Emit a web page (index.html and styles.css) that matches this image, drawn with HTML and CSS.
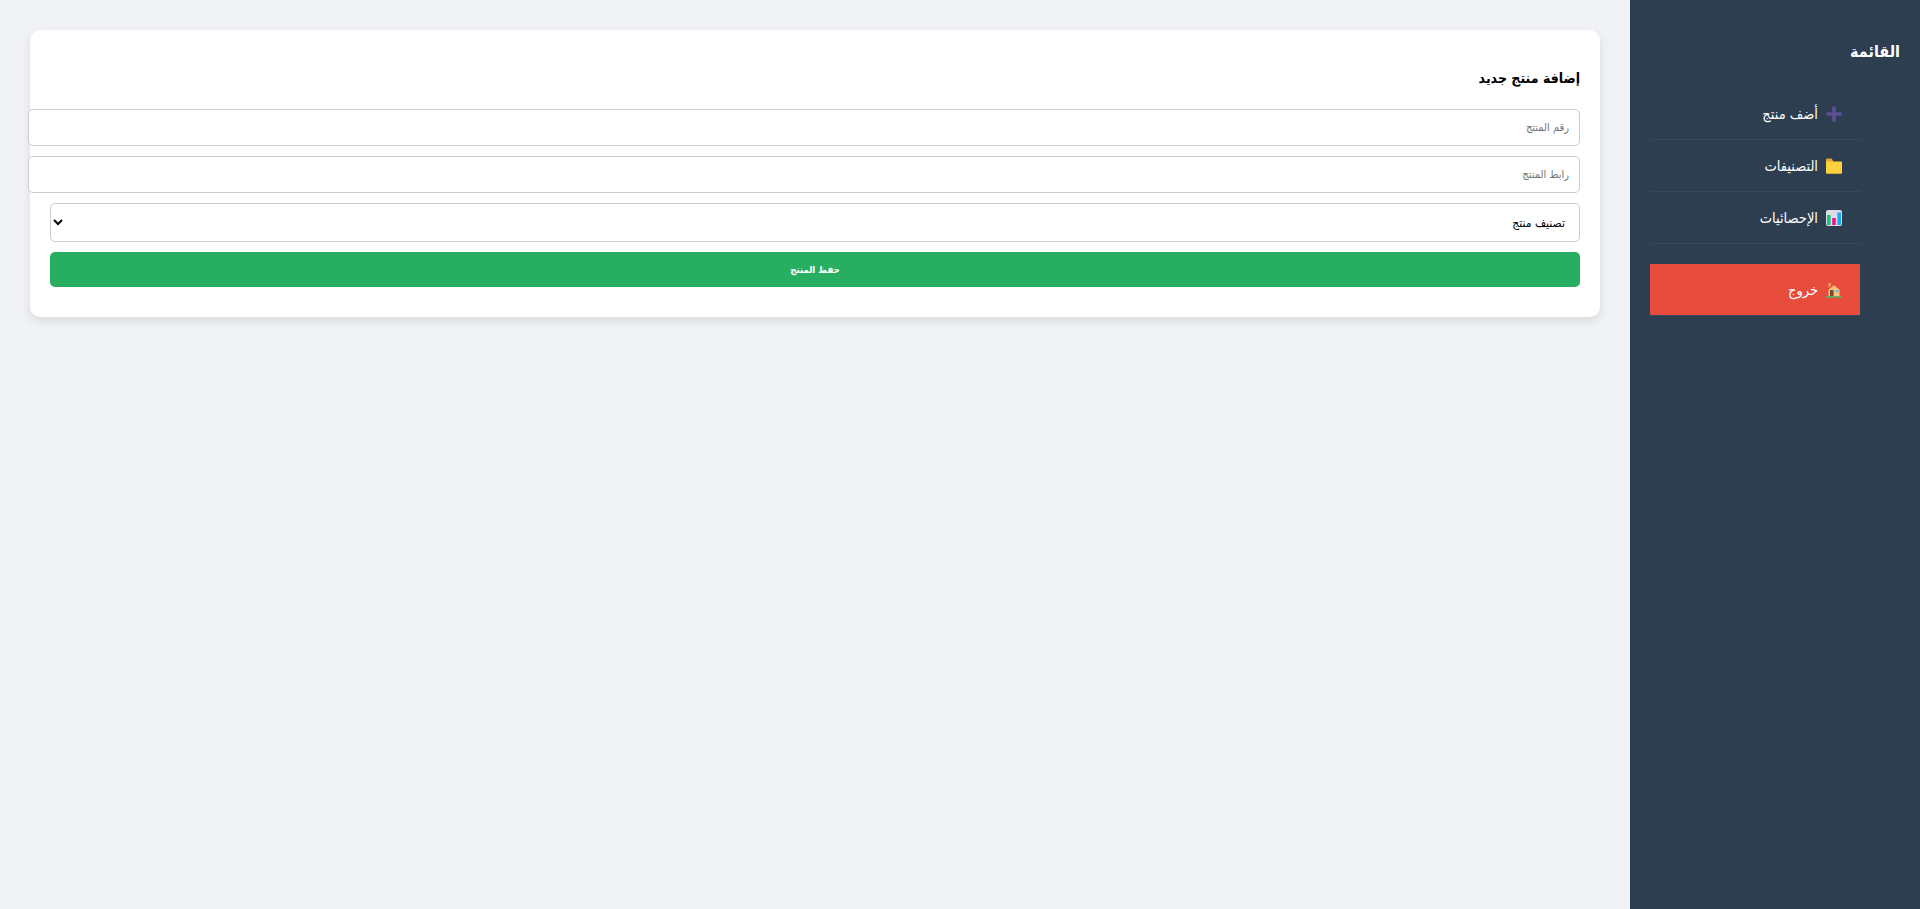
FILE: index.html
```html
<!DOCTYPE html>
<html lang="ar" dir="rtl">
    <head>
        <meta charset="UTF-8" />
        <meta name="viewport" content="width=device-width, initial-scale=1.0" />
        <title>إضافة منتج جديد</title>
        <link rel="stylesheet" href="styles.css">
    </head>

    <body>
        <div class="sidebar">
            <h2 class="sidebar-title">القائمة</h2>
            <ul class="menu">
                <li>
                    <a class="menu-link">
                        <svg class="menu-icon" viewBox="0 0 16 16"><path d="M6.2.5h3.6v5.7h5.7v3.6H9.8v5.7H6.2V9.8H.5V6.2h5.7z" fill="#5c4f96"/></svg>
                        <span>أضف منتج</span>
                    </a>
                </li>
                <li>
                    <a class="menu-link">
                        <svg class="menu-icon" viewBox="0 0 16 16">
                            <path d="M0 1.5q0-1 1-1h4.5l1.5 2v2H0z" fill="#e8a33a"/>
                            <path d="M0 3.5h15q1 0 1 1V15q0 .8-1 .8H1q-1 0-1-.8z" fill="#fdd13c"/>
                        </svg>
                        <span>التصنيفات</span>
                    </a>
                </li>
                <li>
                    <a class="menu-link">
                        <svg class="menu-icon" viewBox="0 0 16 16">
                            <rect width="16" height="16" rx="2" fill="#dcdce6"/>
                            <rect x="1" y="5" width="3.6" height="10" fill="#12c77c"/>
                            <rect x="6.2" y="8" width="3.6" height="7" fill="#f0148c"/>
                            <rect x="11.4" y="2.5" width="3.6" height="12.5" fill="#1ea7f0"/>
                        </svg>
                        <span>الإحصائيات</span>
                    </a>
                </li>
                <li class="logout">
                    <a class="menu-link">
                        <svg class="menu-icon" viewBox="0 0 16 16">
                            <rect x="2.5" y="1" width="2.5" height="5" fill="#f2a65e"/>
                            <path d="M2.5 7.5 8 3l5.5 4.5V14h-11z" fill="#f5c67c"/>
                            <path d="M1 8 8 2l7 6" fill="none" stroke="#f2453a" stroke-width="1.5"/>
                            <rect x="4" y="8" width="3.6" height="6" fill="#7a4a32"/>
                            <rect x="9.5" y="7.5" width="3" height="3" rx="1.5" fill="#6fb4e8"/>
                            <rect y="14" width="16" height="1.6" fill="#58b368"/>
                        </svg>
                        <span>خروج</span>
                    </a>
                </li>
            </ul>
        </div>

        <div class="main">
            <div class="card">
                <h3 class="card-title">إضافة منتج جديد</h3>
                <form>
                    <input class="text-input" type="text" placeholder="رقم المنتج" />
                    <input class="text-input" type="text" placeholder="رابط المنتج" />
                    <select class="select-input">
                        <option>تصنيف منتج</option>
                    </select>
                    <button class="save-btn" type="button">حفظ المنتج</button>
                </form>
            </div>
        </div>
    </body>
</html>
```

FILE: styles.css
```css
* {
    font-family: "DejaVu Sans", sans-serif;
    font-stretch: condensed;
}

body {
    margin: 0;
    padding: 0;
    display: flex;
    min-height: 100vh;
    background-color: #f0f2f5;
}

.sidebar {
    width: 250px;
    padding: 20px;
    background-color: #2c3e50;
    color: white;
    flex-shrink: 0;
}

.sidebar-title {
    margin: 21px 0 25px;
    font-size: 16px;
    line-height: 22px;
}

.menu {
    list-style: none;
    margin: 0;
    padding: 0 40px 0 0;
}

.menu li {
    border-bottom: 1px solid #34495e;
}

.menu-link {
    display: flex;
    align-items: center;
    gap: 8px;
    height: 21px;
    padding: 15px 18px;
    font-size: 14.5px;
    color: white;
    cursor: pointer;
}

.menu-icon {
    width: 16px;
    height: 16px;
    flex-shrink: 0;
}

.logout {
    margin-top: 20px;
    background-color: #e74c3c;
}

.main {
    flex: 1;
    padding: 30px;
}

.card {
    padding: 20px;
    background-color: white;
    border-radius: 10px;
    box-shadow: 0 4px 10px rgba(0, 0, 0, 0.1);
}

.card-title {
    margin: 18px 0 21px;
    font-size: 14px;
    line-height: 20px;
    color: black;
}

.text-input {
    display: block;
    width: 100%;
    height: 15px;
    margin-bottom: 10px;
    padding: 10px;
    border: 1px solid #ccc;
    border-radius: 5px;
    font-size: 11px;
}

.select-input {
    display: block;
    box-sizing: border-box;
    width: 100%;
    height: 39px;
    margin-bottom: 10px;
    padding: 10px;
    border: 1px solid #ccc;
    border-radius: 5px;
    background-color: white;
    font-size: 12px;
}

.save-btn {
    display: block;
    width: 100%;
    height: 35px;
    margin-bottom: 10px;
    border: none;
    border-radius: 5px;
    background-color: #27ae60;
    color: white;
    font-size: 9.5px;
    font-weight: bold;
    cursor: pointer;
}
```
